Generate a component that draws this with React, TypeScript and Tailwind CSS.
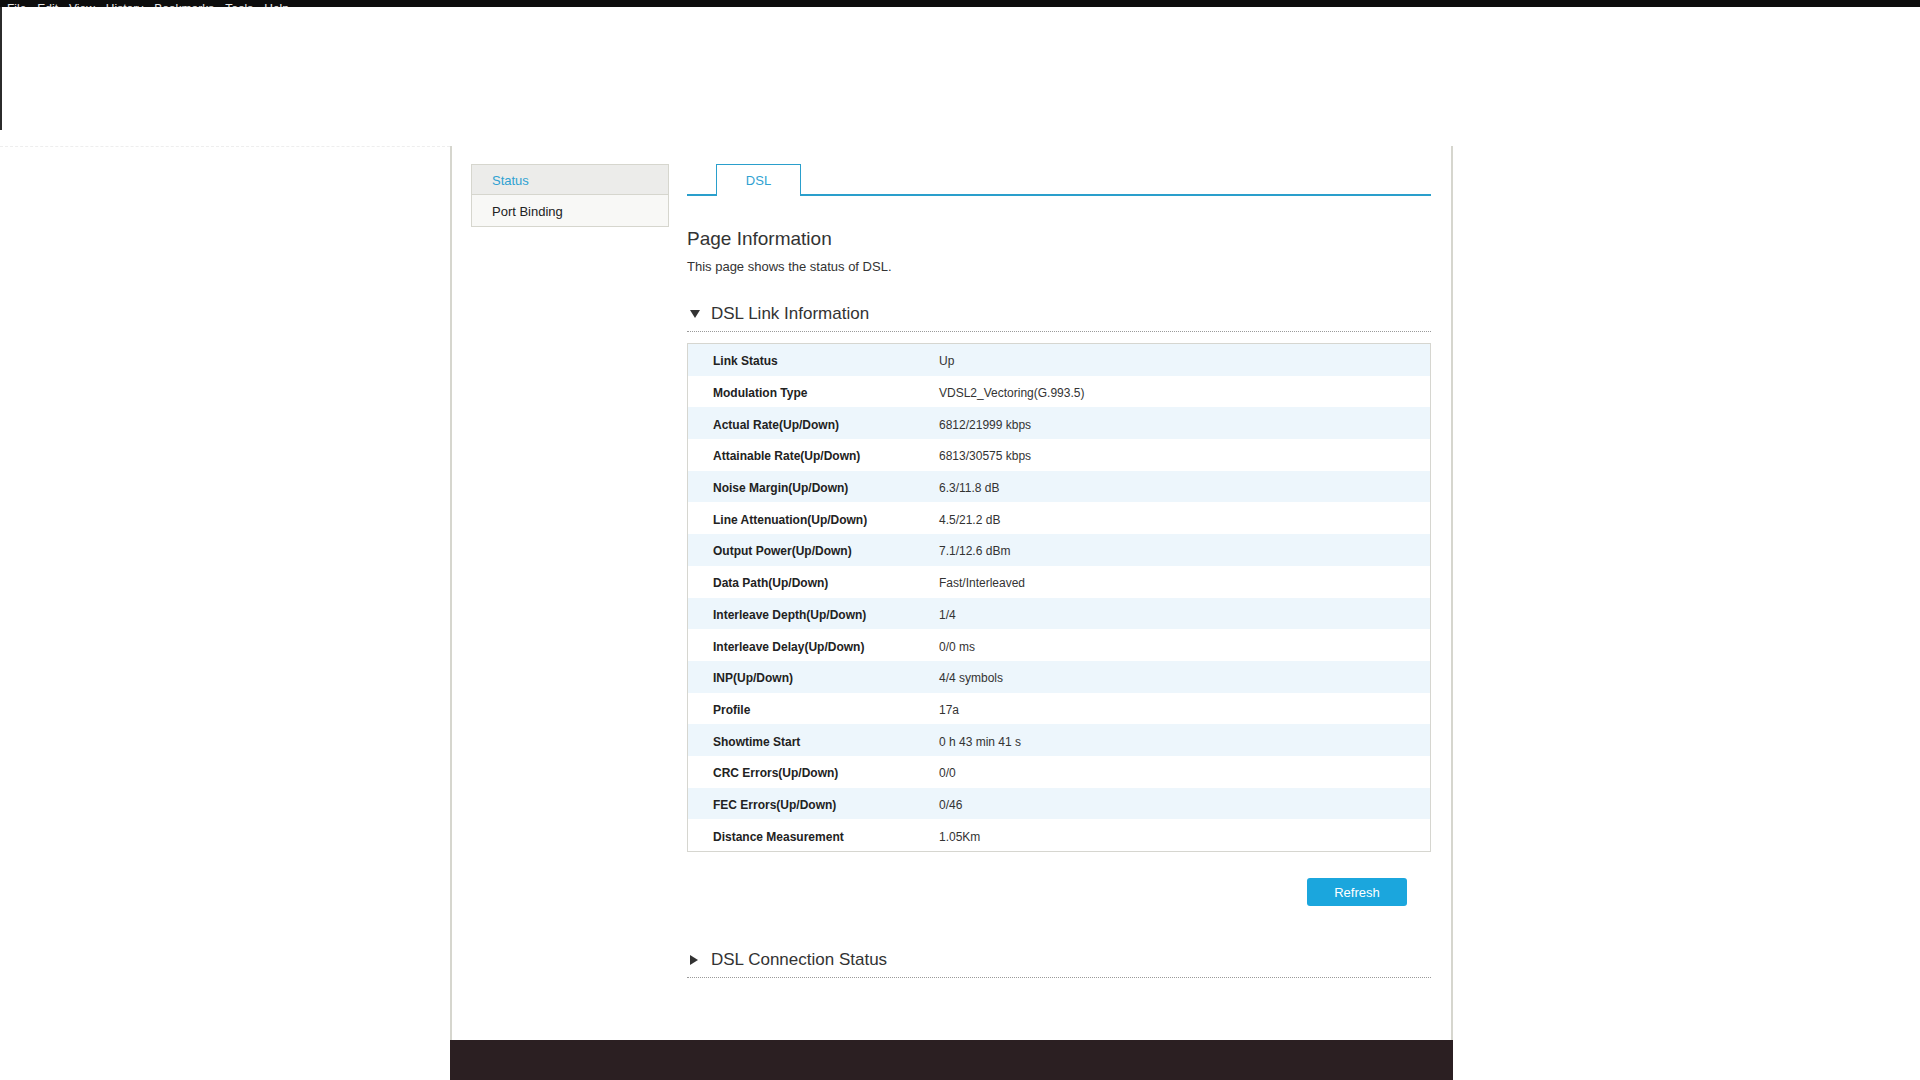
import React from "react";

const rows: [string, string][] = [
  ["Link Status", "Up"],
  ["Modulation Type", "VDSL2_Vectoring(G.993.5)"],
  ["Actual Rate(Up/Down)", "6812/21999 kbps"],
  ["Attainable Rate(Up/Down)", "6813/30575 kbps"],
  ["Noise Margin(Up/Down)", "6.3/11.8 dB"],
  ["Line Attenuation(Up/Down)", "4.5/21.2 dB"],
  ["Output Power(Up/Down)", "7.1/12.6 dBm"],
  ["Data Path(Up/Down)", "Fast/Interleaved"],
  ["Interleave Depth(Up/Down)", "1/4"],
  ["Interleave Delay(Up/Down)", "0/0 ms"],
  ["INP(Up/Down)", "4/4 symbols"],
  ["Profile", "17a"],
  ["Showtime Start", "0 h 43 min 41 s"],
  ["CRC Errors(Up/Down)", "0/0"],
  ["FEC Errors(Up/Down)", "0/46"],
  ["Distance Measurement", "1.05Km"],
];

function TriangleDown() {
  return (
    <svg width="10" height="8" viewBox="0 0 10 8" className="shrink-0">
      <polygon points="0,0 10,0 5,8" fill="#333333" />
    </svg>
  );
}

function TriangleRight() {
  return (
    <svg width="8" height="10" viewBox="0 0 8 10" className="shrink-0">
      <polygon points="0,0 8,5 0,10" fill="#333333" />
    </svg>
  );
}

function SectionHeading({ open, title }: { open: boolean; title: string }) {
  return (
    <div className="h-[31px] border-b border-dotted border-[#9a9a9a] flex items-start">
      <div className="h-[24px] flex items-center pt-[2px]">
        <div className="w-[24px] flex items-center pl-[3px]">
          {open ? <TriangleDown /> : <TriangleRight />}
        </div>
        <span className="text-[17px] leading-[24px] text-[#333333]">{title}</span>
      </div>
    </div>
  );
}

export default function App() {
  return (
    <div className="w-[1920px] h-[1080px] overflow-hidden bg-white font-['Liberation_Sans',Arial,sans-serif]">
      {/* browser menu strip */}
      <div className="h-[7px] overflow-hidden bg-[#0d0d0d]">
        <div className="flex gap-[11px] pl-[7px] pt-[1px] text-[12px] leading-[16px] text-[#e8e8e8]">
          <span>File</span>
          <span>Edit</span>
          <span>View</span>
          <span>History</span>
          <span>Bookmarks</span>
          <span>Tools</span>
          <span>Help</span>
        </div>
      </div>

      {/* header frame */}
      <div className="h-[123px] border-l-2 border-[#2b2b2b]" />
      <div className="h-[16px]" />

      <div className="flex">
        <div className="w-[450px] border-t border-dashed border-[#eeeeee]" />
        <div className="w-[1003px] h-[894px] border-x-2 border-[#d6d6ce] flex pl-[19px] pr-[20px] pt-[18px]">
          {/* side menu */}
          <div className="w-[198px] h-[63px] border border-[#d6d6ce] flex flex-col">
            <div className="h-[30px] bg-[#ececea] border-b border-[#d6d6ce] flex items-center pl-[20px] pt-[2px] text-[13px] text-[#2fa2d2]">
              Status
            </div>
            <div className="h-[31px] bg-[#f8f8f6] flex items-center pl-[20px] pt-[2px] text-[13px] text-[#222222]">
              Port Binding
            </div>
          </div>

          {/* main content */}
          <div className="ml-[18px] w-[744px] flex flex-col">
            <div className="h-[32px] flex">
              <div className="w-[29px] border-b-2 border-[#2a9fcc]" />
              <div className="w-[85px] border-x border-t border-[#2a9fcc] bg-white flex items-center justify-center pt-[1px] text-[13px] text-[#2fa2d2]">
                DSL
              </div>
              <div className="flex-1 border-b-2 border-[#2a9fcc]" />
            </div>

            <div className="mt-[30px] text-[19px] leading-[26px] text-[#333333]">Page Information</div>
            <div className="mt-[6px] text-[13px] leading-[18px] text-[#333333]">This page shows the status of DSL.</div>

            <div className="mt-[25px]">
              <SectionHeading open={true} title="DSL Link Information" />
            </div>

            <div className="mt-[11px] border border-[#d6d6d0]">
              {rows.map(([label, value], i) => (
                <div
                  key={label}
                  className={`h-[31.7px] flex items-center pl-[25px] pt-[3px] text-[12px] ${
                    i % 2 === 0 ? "bg-[#edf6fc]" : "bg-white"
                  }`}
                >
                  <div className="w-[226px] font-bold text-[#222222]">{label}</div>
                  <div className="text-[#333333]">{value}</div>
                </div>
              ))}
            </div>

            <div className="mt-[26px] flex justify-end pr-[24px]">
              <button className="w-[100px] h-[28px] rounded-[3px] bg-[#1ba6dd] text-white text-[13px] pt-[2px] flex items-center justify-center">
                Refresh
              </button>
            </div>

            <div className="mt-[41px]">
              <SectionHeading open={false} title="DSL Connection Status" />
            </div>
          </div>
        </div>
      </div>

      {/* footer */}
      <div className="ml-[450px] w-[1003px] h-[40px] bg-[#2b1f22]" />
    </div>
  );
}
